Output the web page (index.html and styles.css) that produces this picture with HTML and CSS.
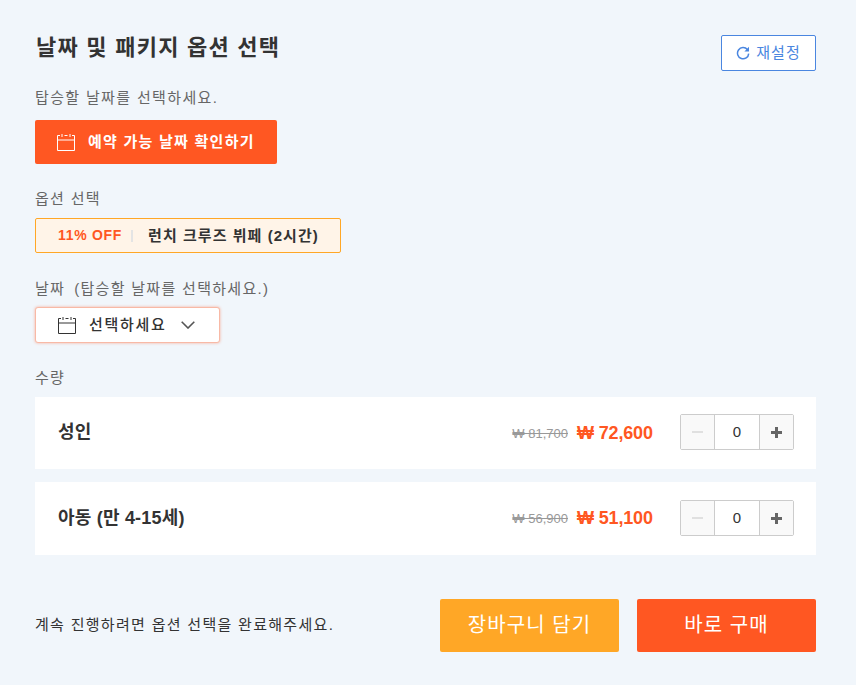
FILE: index.html
```html
<!DOCTYPE html>
<html lang="ko">
<head>
<meta charset="utf-8">
<title>날짜 및 패키지 옵션 선택</title>
<link rel="stylesheet" href="styles.css">
</head>
<body>
<main class="panel">
  <header class="head">
    <div>
      <h1 class="title">날짜 및 패키지 옵션 선택</h1>
      <p class="hint">탑승할 날짜를 선택하세요.</p>
    </div>
    <button class="reset">
      <svg class="reset-icon" viewBox="0 0 14 14" width="14" height="14"><path d="M11.4 3.6A5.6 5.6 0 1 0 12.7 7.6" fill="none" stroke="currentColor" stroke-width="1.5"/><path d="M13 .8V5.4H8.4z" fill="currentColor"/></svg>
      <span class="lift">재설정</span>
    </button>
  </header>

  <button class="check">
    <svg class="cal" viewBox="0 0 18 17" width="18" height="17"><path d="M3 1.5H.5v15h17v-15H15M7.5 1.5h3M.5 6h17" fill="none" stroke="currentColor"/><path d="M5 0v3M13 0v3" stroke="currentColor"/></svg>
    <span class="lift">예약 가능 날짜 확인하기</span>
  </button>

  <div class="label label-option">옵션 선택</div>
  <button class="option">
    <span class="off">11% OFF</span>
    <span class="sep"></span>
    <span class="option-name">런치 크루즈 뷔페 (2시간)</span>
  </button>

  <div class="label label-date"><span>날짜</span><span>(탑승할 날짜를 선택하세요.)</span></div>
  <button class="select">
    <svg class="cal" viewBox="0 0 18 17" width="18" height="17"><path d="M3 1.5H.5v15h17v-15H15M7.5 1.5h3M.5 6h17" fill="none" stroke="currentColor"/><path d="M5 0v3M13 0v3" stroke="currentColor"/></svg>
    <span class="select-text lift">선택하세요</span>
    <svg class="chev" viewBox="0 0 14 8" width="14" height="8"><path d="M.7.7 7 7 13.3.7" fill="none" stroke="currentColor" stroke-width="1.6"/></svg>
  </button>

  <div class="label label-qty">수량</div>
  <section class="rows">
    <div class="row">
      <div class="row-name">성인</div>
      <div class="was">₩ 81,700</div>
      <div class="now">₩ 72,600</div>
      <div class="stepper">
        <span class="step step-minus"></span>
        <span class="count">0</span>
        <span class="step step-plus"></span>
      </div>
    </div>
    <div class="row">
      <div class="row-name">아동 (만 4-15세)</div>
      <div class="was">₩ 56,900</div>
      <div class="now">₩ 51,100</div>
      <div class="stepper">
        <span class="step step-minus"></span>
        <span class="count">0</span>
        <span class="step step-plus"></span>
      </div>
    </div>
  </section>

  <footer class="foot">
    <p class="foot-note">계속 진행하려면 옵션 선택을 완료해주세요.</p>
    <button class="cta cta-cart">장바구니 담기</button>
    <button class="cta cta-buy">바로 구매</button>
  </footer>
</main>
</body>
</html>
```
FILE: styles.css
```css
* { box-sizing: border-box; }
html, body { margin: 0; padding: 0; }
body {
  width: 856px;
  height: 685px;
  overflow: hidden;
  background: #f1f6fb;
  font-family: "Liberation Sans", "Noto Sans CJK KR", sans-serif;
  color: #333;
}
button { font-family: inherit; padding: 0; cursor: pointer; }
.lift { margin-bottom: 4px; }
.panel { padding: 30px 40px 0 35px; }
.head { display: flex; justify-content: space-between; align-items: flex-start; }
.title { margin: 0; font-size: 22px; line-height: 35px; font-weight: 700; letter-spacing: 1.25px; color: #333; padding-left: 1px; }
.hint { margin: 23px 0 0; font-size: 15px; line-height: 20px; letter-spacing: 1.35px; color: #666; }
.reset {
  margin-top: 5px; width: 95px; height: 36px;
  display: flex; align-items: center; justify-content: center; gap: 6px;
  background: #fff; border: 1px solid #4a86e0; border-radius: 2px;
  color: #4a86e0; font-size: 15px; letter-spacing: 1px;
}
.check {
  margin-top: 12px; width: 242px; height: 44px;
  display: flex; align-items: center; padding-left: 22px; gap: 13px;
  background: #ff5722; border: 0; border-radius: 2px;
  color: #fff; font-size: 15px; font-weight: 700; letter-spacing: 1.25px;
}
.label { font-size: 15px; line-height: 20px; letter-spacing: 1.3px; color: #666; }
.label-option { margin-top: 25px; }
.option {
  margin-top: 9px; width: 306px; height: 35px;
  display: flex; align-items: center; padding: 0 0 2px 22px;
  background: #fff4e8; border: 1px solid #ffa726; border-radius: 2px;
  font-size: 15px; color: #333;
}
.off { color: #ff5722; font-weight: 700; font-size: 14px; letter-spacing: .7px; }
.sep { width: 2px; height: 12px; background: #e4e4e4; margin: 2px 15px 0 9px; }
.option-name { font-weight: 700; letter-spacing: 1.05px; }
.label-date { margin-top: 26px; display: flex; gap: 9px; }
.select {
  margin-top: 8px; width: 185px; height: 36px;
  display: flex; align-items: center; padding-left: 22px;
  background: #fff; border: 1px solid #f8b9a6; border-radius: 3px;
  box-shadow: 0 0 3px rgba(255,87,34,.45);
  color: #333; font-size: 15px; font-weight: 500; letter-spacing: 1.7px;
}
.select-text { margin-left: 13px; }
.chev { margin-left: 14px; color: #555; }
.label-qty { margin-top: 25px; }
.rows { margin-top: 9px; display: flex; flex-direction: column; gap: 13px; }
.row {
  height: 72px; display: flex; align-items: center;
  padding: 0 22px 0 23px; background: #fff;
}
.row:last-child { height: 73px; }
.row-name { flex: 1; font-size: 18px; font-weight: 700; color: #333; padding-bottom: 6px; letter-spacing: .2px; }
.was { font-size: 13px; color: #999; text-decoration: line-through; margin-right: -1px; }
.now { margin-left: 10px; font-size: 18px; font-weight: 700; color: #ff5722; width: 76px; white-space: nowrap; letter-spacing: -.15px; }
.stepper {
  margin: 0 0 2px 27px; width: 114px; height: 36px;
  display: flex; border: 1px solid #ccc; border-radius: 2px; background: #fff;
}
.step { width: 34px; background: #f9f9f9; position: relative; flex: none; }
.step-plus { border-left: 1px solid #ccc; }
.step-minus { border-right: 1px solid #ccc; }
.step::before, .step-plus::after {
  content: ""; position: absolute; left: 50%; top: 50%;
  width: 11px; height: 3px; margin: -1px 0 0 -6px; background: #666;
}
.step-minus::before { background: #e0e0e0; height: 2px; }
.step-plus::after { width: 3px; height: 11px; margin: -5px 0 0 -2px; }
.count { flex: 1; text-align: center; font-size: 15px; line-height: 34px; color: #333; }
.foot { margin-top: 44px; display: flex; align-items: center; }
.foot-note { margin: 0 0 4px; flex: 1; font-size: 15px; letter-spacing: 1.3px; color: #333; }
.cta { width: 179px; height: 53px; padding-bottom: 4px; border: 0; border-radius: 2px; color: #fff; font-size: 20px; letter-spacing: 1.1px; }
.cta-cart { background: #ffa726; }
.cta-buy { margin-left: 18px; background: #ff5722; }
```
